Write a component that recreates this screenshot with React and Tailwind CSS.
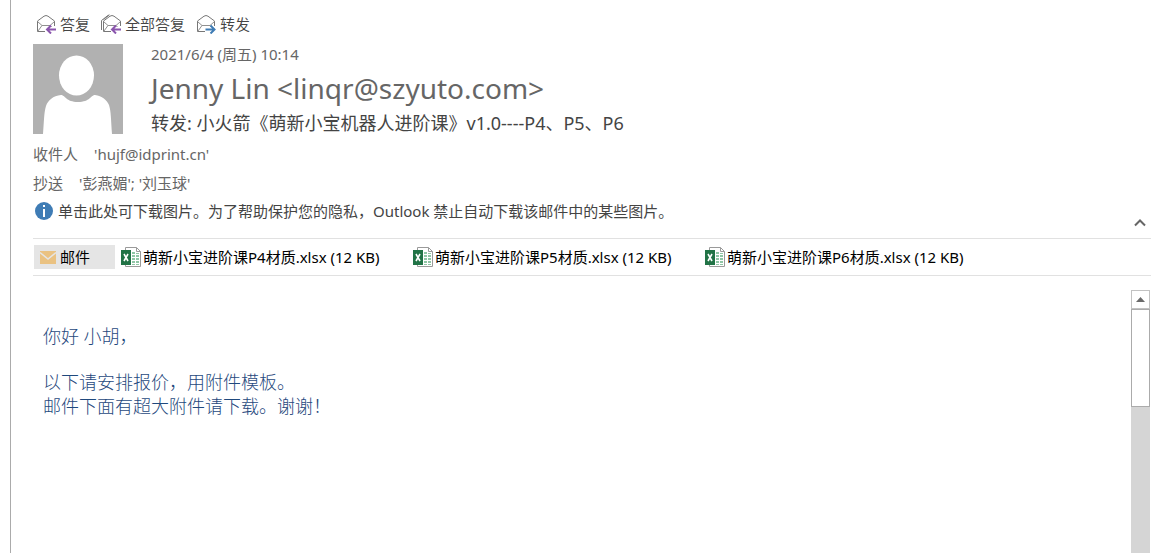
const UI_FONT = "font-['Noto_Sans','Noto_Sans_CJK_SC',sans-serif]";

const attachments = [
  '萌新小宝进阶课P4材质.xlsx (12 KB)',
  '萌新小宝进阶课P5材质.xlsx (12 KB)',
  '萌新小宝进阶课P6材质.xlsx (12 KB)',
];

function EnvelopeIcon({ kind }) {
  const arrow = kind === 'forward' ? '#3f7cb5' : '#8a55ad';
  return (
    <svg width="20" height="20" viewBox="0 0 20 20" fill="none" aria-hidden="true" className="shrink-0">
      {kind === 'all' && <path d="M.5 16V6.500L7.500 1M2.500 5.500L8.500.8" stroke="#777" />}
      <g transform={kind === 'all' ? 'translate(1 0)' : undefined}>
        <path d="M9 17.500H1.500V7l6.500-4.800q2-1.400 4 0L18.500 7v5" stroke="#777" />
        <path d="M1.500 7.500l4.500 4h8l4.500-4M2 17l4-5.500M14 11.500l1.500 1.500" stroke="#909090" />
      </g>
      {kind === 'forward' ? (
        <path d="M9.500 15.500H18M14.500 11.500l4 4-4 4" stroke={arrow} strokeWidth="2" />
      ) : (
        <path d="M20 15.500h-8.500M15 11.500l-4 4 4 4" stroke={arrow} strokeWidth="2" />
      )}
    </svg>
  );
}

function ExcelIcon() {
  return (
    <svg width="20" height="20" viewBox="0 0 20 20" aria-hidden="true" className="shrink-0">
      <path d="M4.500.5h11l4 4v15h-15z" fill="#fff" stroke="#9a9a9a" />
      <path d="M15.500.5v4h4" fill="none" stroke="#9a9a9a" />
      <path
        d="M11 5h3v2h-3zM11 8h3v2h-3zM15 8h3v2h-3zM11 11h3v2h-3zM15 11h3v2h-3zM11 14h3v2h-3zM15 14h3v2h-3zM11 17h3v1h-3zM15 17h3v1h-3zM15 6h3v1h-3z"
        fill="#8fc6a5"
      />
      <path d="M0 3h10v15H0z" fill="#217346" />
      <path d="M3 7l4 7M7 7l-4 7" stroke="#fff" strokeWidth="1.600" />
    </svg>
  );
}

function Avatar() {
  return (
    <svg width="90" height="90" viewBox="0 0 90 90" role="img" aria-label="Jenny Lin" className="shrink-0">
      <path fill="#b1b1b1" d="M0 0h90v90H0z" />
      <ellipse cx="43.500" cy="31.500" rx="17.500" ry="20" fill="#fff" />
      <path
        fill="#fff"
        d="M10 90c1-12 1-22 3-28 2-6 7-10 15-11 4 0 5 7 17 7s13-7 17-7c7 1 12 5 14 10 2 6 2 15 3 29z"
      />
    </svg>
  );
}

function ToolButton({ kind, children }) {
  return (
    <button type="button" className="flex items-center gap-1 text-[15px] leading-6 font-[350] text-[#444]">
      <EnvelopeIcon kind={kind} />
      {children}
    </button>
  );
}

export default function App() {
  return (
    <div className={`flex h-screen bg-white pl-[10px] text-[#666] ${UI_FONT}`}>
      <main className="flex min-w-0 flex-1 flex-col border-l border-[#ababab] pr-[14px] pl-[22px]">
        <div className="flex gap-[11px] pt-3 pl-[3px]">
          <ToolButton kind="reply">答复</ToolButton>
          <ToolButton kind="all">全部答复</ToolButton>
          <ToolButton kind="forward">转发</ToolButton>
        </div>

        <header className="mt-2 flex gap-7">
          <Avatar />
          <div className="min-w-0 whitespace-nowrap">
            <p className="text-[15px] leading-5">2021/6/4 (周五) 10:14</p>
            <h1 className="text-[28px] leading-[48px]">Jenny Lin &lt;linqr@szyuto.com&gt;</h1>
            <h2 className="text-[18px] leading-[22px] text-[#444]">
              转发: 小火箭《萌新小宝机器人进阶课》v1.0----P4、P5、P6
            </h2>
          </div>
        </header>

        <dl className="mt-[6px] text-[15px] leading-[29px]">
          <div className="flex gap-4">
            <dt>收件人</dt>
            <dd>'hujf@idprint.cn'</dd>
          </div>
          <div className="flex gap-4">
            <dt>抄送</dt>
            <dd>'彭燕媚'; '刘玉球'</dd>
          </div>
        </dl>

        <div className="flex items-start justify-between border-b border-[#e1e1e1] pb-[11px]">
          <button type="button" className="flex items-center gap-[5px] pl-[2px] text-[15px] leading-[26px] text-[#444]">
            <svg width="18" height="18" viewBox="0 0 18 18" aria-hidden="true" className="shrink-0">
              <circle cx="9" cy="9" r="9" fill="#3f7cb5" />
              <path d="M8 3h2v2H8zM8 7h2v8H8z" fill="#fff" />
            </svg>
            单击此处可下载图片。为了帮助保护您的隐私，Outlook 禁止自动下载该邮件中的某些图片。
          </button>
          <button type="button" aria-label="折叠" className="pt-[21px] pr-[5px]">
            <svg width="12" height="8" viewBox="0 0 12 8" fill="none" aria-hidden="true">
              <path d="M1 6.500l5-5 5 5" stroke="#666" strokeWidth="2" />
            </svg>
          </button>
        </div>

        <div className="flex border-b border-[#e1e1e1] py-[6px] pl-px text-[15px] leading-6 whitespace-nowrap text-black">
          <button type="button" className="mr-[6px] flex w-[81px] shrink-0 items-center gap-1 bg-[#e5e5e5] pl-[6px]">
            <svg width="16" height="13" viewBox="0 0 16 13" aria-hidden="true">
              <path d="M0 0h16v13H0z" fill="#eac282" />
              <path d="M0 1.500l8 6.500 8-6.500" fill="none" stroke="#e5e5e5" strokeWidth="1.500" />
            </svg>
            邮件
          </button>
          {attachments.map((name) => (
            <button key={name} type="button" className="flex w-[292px] items-center gap-[2px]">
              <ExcelIcon />
              {name}
            </button>
          ))}
        </div>

        <div className="mt-[14px] flex min-h-0 flex-1 justify-between">
          <article className="pt-[35px] pl-[10px] font-['Liberation_Serif','Noto_Sans_CJK_SC',sans-serif] text-[18px] leading-6 font-light text-[#1f497d]">
            <p>你好 小胡，</p>
            <p className="mt-[22px]">以下请安排报价，用附件模板。</p>
            <p>邮件下面有超大附件请下载。谢谢！</p>
          </article>
          <div className="mr-px flex w-[19px] shrink-0 flex-col bg-[#d5d5d5]">
            <button
              type="button"
              aria-label="向上滚动"
              className="flex h-[19px] items-center justify-center border border-[#c2c2c2] bg-white"
            >
              <svg width="9" height="5" viewBox="0 0 9 5" aria-hidden="true">
                <path d="M4.500 0L9 5H0z" fill="#6a6a6a" />
              </svg>
            </button>
            <div className="h-[98px] border border-[#ababab] bg-white" />
          </div>
        </div>
      </main>
    </div>
  );
}
